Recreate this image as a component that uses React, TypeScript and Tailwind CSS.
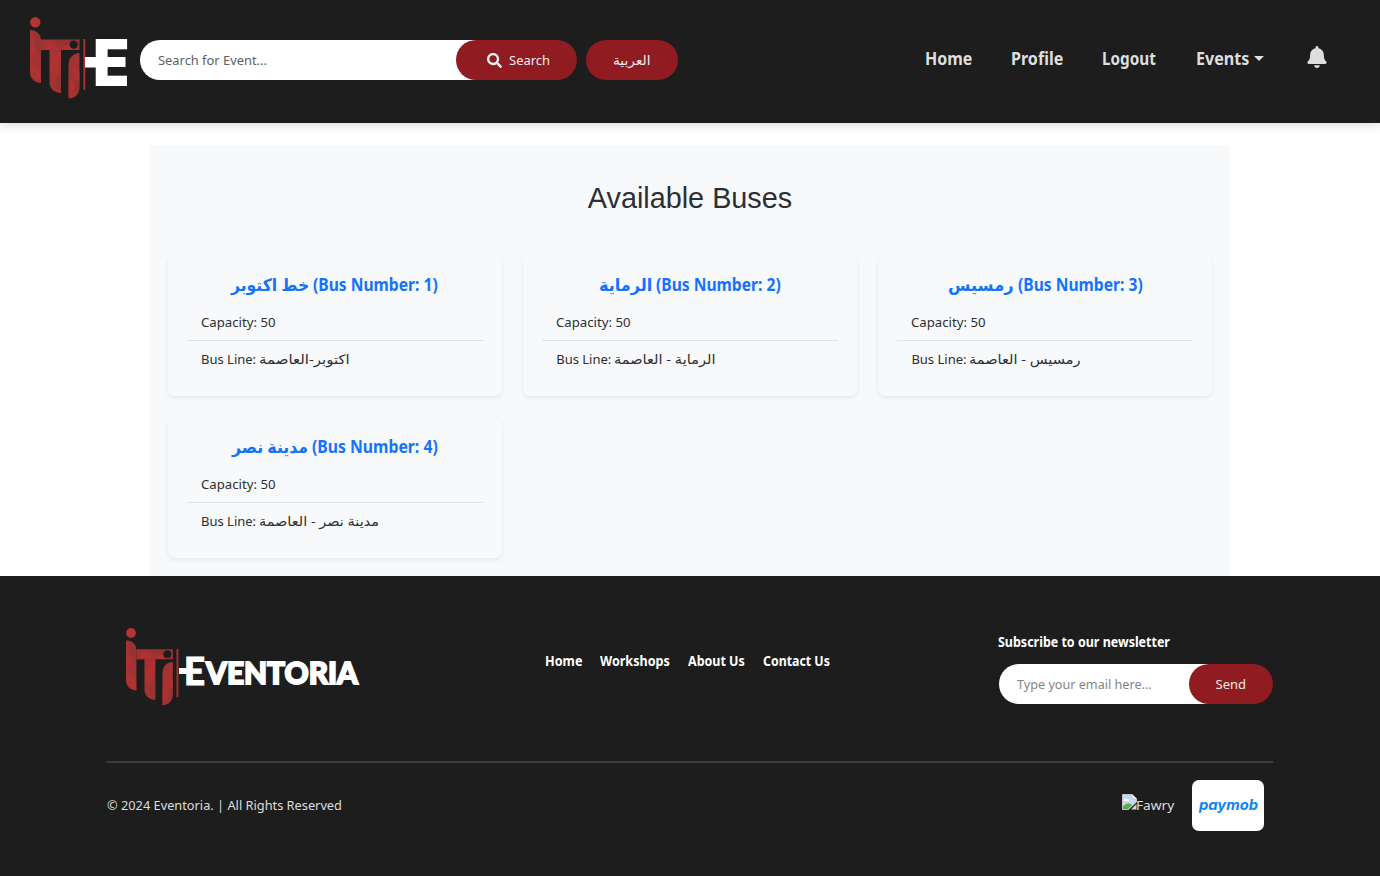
import { useLayoutEffect, useRef, useState } from "react";
import type { ReactNode } from "react";
import { FaBell, FaSearch } from "react-icons/fa";

/** One line of text drawn at a fixed measure. */
function Fit({ w, className = "", children }: { w: number; className?: string; children: ReactNode }) {
  const ref = useRef<HTMLSpanElement>(null);
  const [scale, setScale] = useState(1);
  useLayoutEffect(() => {
    if (ref.current) setScale(w / ref.current.offsetWidth);
  }, [w]);
  return (
    <span className={`inline-flex shrink-0 whitespace-nowrap ${className}`} style={{ width: w }}>
      <span ref={ref} className="inline-block shrink-0 origin-left" style={{ transform: `scaleX(${scale})` }}>
        {children}
      </span>
    </span>
  );
}

function Mark() {
  return (
    <>
      <g fill="#a23332">
        <circle cx="5.3" cy="5.3" r="5.2" fill="#b03533" />
        <path d="M0 13C6 13 11 17 11 24V66C5 66 0 62 0 55Z" />
        <path d="M11 22.500H49.500V33H31V76C25 76 19.500 72 19.500 65V33H11Z" />
        <path d="M49.500 36V70C49.500 77 45 81.500 38.500 81.500V48C38.500 41 43 36 49.500 36Z" />
        <rect x="53.300" y="22" width="2" height="51" />
      </g>
      <g fill="#bd302f" opacity=".55">
        <path d="M0 26L7 33L0 43ZM0 43L6 55L0 58ZM4 48L11 58V66L5 62ZM20 43L31 33V43L25 60L20 54ZM38.500 60L46 68L38.500 80ZM42 46L49.500 55V65L44 58Z" />
        <path d="M11 33L20 24L29 33ZM31 33L40 26L43 33Z" />
      </g>
      <path d="M4 15L11 24V40L6 32ZM24 23H49V26L30 29ZM27 60L31 55V75L25 70ZM45 66L49.500 62V72L44 79Z" fill="#833331" opacity=".45" />
      <circle cx="43.700" cy="27.600" r="4.200" fill="#1d1d1d" />
    </>
  );
}

const buses = [
  { name: "خط اكتوبر", nw: 78, num: 1, tw: 125, line: "اكتوبر-العاصمة", lw: 91 },
  { name: "الرماية", nw: 53, num: 2, tw: 125, line: "الرماية - العاصمة", lw: 102 },
  { name: "رمسيس", nw: 66, num: 3, tw: 125, line: "رمسيس - العاصمة", lw: 112 },
  { name: "مدينة نصر", nw: 76, num: 4, tw: 126, line: "مدينة نصر - العاصمة", lw: 120 },
];

export default function App() {
  return (
    <div className="h-[876px] w-[1380px] overflow-hidden bg-white font-['Noto_Sans','DejaVu_Sans',sans-serif] text-[13px] text-[#2b2f33]">
      <header className="relative flex h-[123px] bg-[#1d1d1d] pl-[30px] shadow-[0_2px_10px_rgba(0,0,0,0.15)]">
        <svg width="110" height="84" viewBox="0 0 110 84" className="mt-[17px] shrink-0">
          <Mark />
          <rect x="55" y="40" width="13" height="10.500" fill="#fff" />
          <text transform="translate(62.900 69) scale(.925 1)" fontFamily="Inter" fontWeight="900" fontSize="64.500" fill="#fff">E</text>
        </svg>
        <div className="mt-10 flex h-10 w-[437px]">
          <div className="flex h-10 w-[346px] items-center rounded-l-full bg-white pt-px pl-[18px]">
            <Fit w={109} className="text-[#5c6165]">Search for Event...</Fit>
          </div>
          <button className="-ml-[30px] flex h-10 w-[121px] items-center rounded-full bg-[#901b20] pl-[31px] text-[#eee]">
            <FaSearch size={15} className="mr-[7px]" />
            <Fit w={41} className="pt-px">Search</Fit>
          </button>
        </div>
        <button className="mt-10 ml-[9px] flex h-10 w-[92px] items-center justify-center rounded-full bg-[#901b20] pt-px text-[#eee]">
          <Fit w={38}>العربية</Fit>
        </button>
        <nav className="mt-[45px] ml-[247px] flex h-[27px] items-center text-[17px] font-bold text-[#dedede]">
          <Fit w={47} className="mr-[39px]">Home</Fit>
          <Fit w={52} className="mr-[39px]">Profile</Fit>
          <Fit w={54} className="mr-[40px]">Logout</Fit>
          <Fit w={53}>Events</Fit>
          <span className="ml-[5px] border-x-[5px] border-t-[5px] border-x-transparent" />
        </nav>
        <FaBell size={22} className="mt-[46px] ml-[42px] text-[#dedede]" />
      </header>

      <main className="mx-auto mt-[22px] h-[431px] w-[1080px] bg-[#f8f9fb] px-[18px] pt-9">
        <h1 className="mb-10 text-center font-['Liberation_Sans',sans-serif] text-[28.800px] leading-[34px]">Available Buses</h1>
        <div className="grid grid-cols-3 gap-x-[21.600px] gap-y-[21.400px]">
          {buses.map((b) => (
            <article key={b.num} className="h-[141px] rounded-[7px] px-[19px] pt-[16px] shadow-[0_2px_4px_rgba(0,0,0,0.075)]">
              <h2 className="flex h-[27px] items-center justify-center text-[17px] font-bold text-[#1473fb]">
                <Fit w={b.nw} className="mr-1">{b.name}</Fit>
                <Fit w={b.tw}>(Bus Number: {b.num})</Fit>
              </h2>
              <div className="mt-[6px] flex h-[37px] items-center border-b border-[#dee2e6] pt-px pl-[14px]">
                <Fit w={74}>Capacity: 50</Fit>
              </div>
              <div className="flex h-[37px] items-center pl-[14px]">
                <Fit w={55} className="mr-[3px]">Bus Line:</Fit>
                <Fit w={b.lw}>{b.line}</Fit>
              </div>
            </article>
          ))}
        </div>
      </main>

      <footer className="h-[300px] bg-[#1d1d1d] px-[107px] text-[#ddd]">
        <div className="flex h-[187px] border-b-2 border-[#3b3b3b]">
          <svg width="240" height="80" viewBox="0 0 240 80" className="mt-[52px] ml-[19px] shrink-0 overflow-visible">
            <g transform="scale(.947)"><Mark /></g>
            <rect x="53" y="40" width="10" height="6" fill="#fff" />
            <g fill="#fff" stroke="#fff" fontFamily="Lato" fontWeight="900">
              <text x="58" y="56.500" fontSize="38" strokeWidth="1" textLength="21" lengthAdjust="spacingAndGlyphs">E</text>
              <text x="80" y="56.200" fontSize="30.500" strokeWidth="1.800" textLength="152" lengthAdjust="spacingAndGlyphs">VENTORIA</text>
            </g>
          </svg>
          <nav className="mt-[73px] ml-[179px] flex h-[22px] items-center text-[14px] font-bold text-white">
            <Fit w={37} className="mr-[18px]">Home</Fit>
            <Fit w={70} className="mr-[18px]">Workshops</Fit>
            <Fit w={57} className="mr-[18px]">About Us</Fit>
            <Fit w={67}>Contact Us</Fit>
          </nav>
          <div className="mt-[54px] ml-auto w-[275px]">
            <h3 className="flex h-[22px] items-center text-[14px] font-bold text-white"><Fit w={172}>Subscribe to our newsletter</Fit></h3>
            <div className="mt-[12px] flex h-10">
              <div className="ml-px flex h-10 w-[220px] items-center rounded-l-full bg-white pt-px pl-[18px]">
                <Fit w={135} className="text-[#858585]">Type your email here...</Fit>
              </div>
              <button className="-ml-[30px] flex h-10 w-[84px] items-center justify-center rounded-full bg-[#901b20] pt-px text-[#eee]"><Fit w={31}>Send</Fit></button>
            </div>
          </div>
        </div>
        <div className="flex h-[84px] items-center pr-[9px]">
          <Fit w={235} className="mt-[1px]">© 2024 Eventoria. | All Rights Reserved</Fit>
          <svg width="15" height="16" viewBox="0 0 15 16" className="mt-[-6px] ml-auto">
            <path d="M.5.500H10L14.500 5V8L6.500 15.500H.500Z" fill="#c5d9f8" stroke="#c4c4c4" />
            <path d="M10 0V5H15Z" fill="#fff" stroke="#aaa" strokeWidth=".5" />
            <path d="M2 6.500C2 5 4 4 5 5.500C6.500 5 7.500 6 7 7H2Z" fill="#fff" />
            <path d="M1 15V12.500Q6 7 10 11L6 15Z" fill="#56ae45" />
            <path d="M14.500 10V15.500H9Z" fill="#d5d5d5" />
          </svg>
          <Fit w={38} className="mt-[1px] mr-[18px] ml-[-1px]">Fawry</Fit>
          <div className="flex h-[51px] w-[72px] items-center justify-center rounded-[7px] bg-white font-['Inter',sans-serif] text-[14.500px] font-bold text-[#0d84f5] italic">
            <Fit w={59}>paymob</Fit>
          </div>
        </div>
      </footer>
    </div>
  );
}
